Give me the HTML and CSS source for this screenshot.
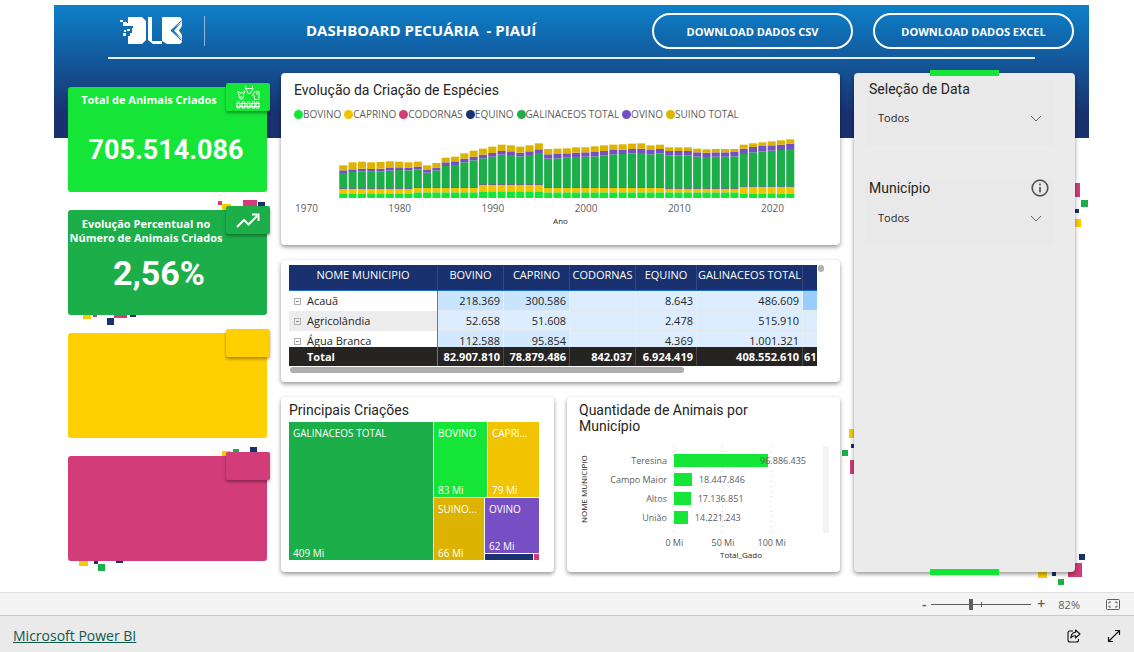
FILE: index.html
```html
<!DOCTYPE html>
<html lang="pt-BR">
<head>
<meta charset="utf-8">
<meta name="viewport" content="width=device-width, initial-scale=1">
<title>Dashboard Pecuária - Piauí</title>
<link rel="stylesheet" href="styles.css">
</head>
<body>
<main class="report">
  <header class="top">
    <svg class="logo" viewBox="0 0 63 30" width="63" height="30" aria-label="DLB" role="img">
      <g fill="#fff">
        <path d="M8 1H22L26 5V24L22 28H8V20H10V17H12V12H13V10H8Z"/>
        <path d="M28 1H32V25H42V28H33L28 24Z"/>
        <path d="M42 1H60L62 3V6L51 14.500L62 23V26L60 28H47L42 25Z"/>
        <rect x="0" y="4" width="3" height="2"/><rect x="3" y="6" width="4" height="4"/><rect x="7" y="7" width="2" height="3"/>
        <rect x="4" y="14" width="2" height="2"/><rect x="7" y="13" width="3" height="2"/><rect x="3" y="17" width="3" height="3"/>
        <path d="M62 6V10L59 14.500L62 19V23L54 14.500Z"/>
      </g>
      <path d="M61.500 4.500L51 14.500L61.500 24.500" fill="none" stroke="#125fa9"/>
    </svg>
    <span class="divider"></span>
    <h1>DASHBOARD PECUÁRIA &nbsp;- PIAUÍ</h1>
    <button class="pill" type="button">DOWNLOAD DADOS CSV</button>
    <button class="pill" type="button">DOWNLOAD DADOS EXCEL</button>
  </header>

  <div class="board">
    <div class="stats">
      <section class="stat lime">
        <h2>Total de Animais Criados</h2>
        <p>705.514.086</p>
        <span class="badge">
          <svg viewBox="0 0 24 24" width="24" height="24" fill="none" stroke="#fff" stroke-width=".9">
            <path d="M1 23V18L2.500 16L4 18V23ZM6 23V18L7.500 16L9 18V23ZM11 23V18L12.500 16L14 18V23ZM16 23V18L17.500 16L19 18V23ZM20 23V18L21.500 16L23 18V23ZM0 18.500H24M0 21.500H24"/>
            <path d="M2 8Q1 5.500 3 6.500L4 8H6.500L7.500 6.500Q9.500 5.500 8.500 8L7.500 9V12L6.500 14H4L3 12V9ZM4 12H6.500"/>
            <path d="M9.500 1Q9 3 11 3.500H15Q17 3 16.500 1M11 3.500L9 4L11 5.500L12 8.500H14.500L15.500 5.500L17.500 4L15 3.500"/>
            <path d="M18.500 7L20 6.500H23V14.500H18.500V11L16.500 10.500ZM21 7V10"/>
          </svg>
        </span>
      </section>
      <section class="stat green">
        <h2>Evolução Percentual no Número de Animais Criados</h2>
        <p>2,56%</p>
        <span class="badge">
          <svg viewBox="0 0 24 15" width="24" height="15" fill="none" stroke="#fff" stroke-width="2"><path d="M1 14L8 7L12.500 11.500L21 3M16 1.500H22.500V8"/></svg>
        </span>
        <svg class="confetti" viewBox="-2 -10 204 126" width="204" height="126">
          <path class="c-pink" d="M150-9h4v4h-4zM175-10h14v9h-14zM25 103h4v4h-4zM46 103h13v5h-13z"/>
          <path class="c-yellow" d="M154-6h9v8h-9zM15 103h8v6h-8z"/>
          <path class="c-navy" d="M190-8h7v7h-7zM39 108h7v7h-7zM62 103h6v4h-6z"/>
        </svg>
      </section>
      <section class="stat yellow"><span class="badge"></span></section>
      <section class="stat pink">
        <span class="badge"></span>
        <svg class="confetti" viewBox="-2 -10 204 126" width="204" height="126">
          <path class="c-yellow" d="M154-5h9v8h-9zM11 103h9v7h-9z"/>
          <path class="c-green" d="M165-7h6v7h-6zM30 108h7v7h-7z"/>
          <path class="c-navy" d="M182-9h7v7h-7zM26 103h4v5h-4zM48 103h7v4h-7z"/>
        </svg>
      </section>
    </div>

    <div class="middle">
      <section class="card trend">
        <h2>Evolução da Criação de Espécies</h2>
        <ul class="legend">
          <li class="k-bov">BOVINO</li><li class="k-cap">CAPRINO</li><li class="k-cod">CODORNAS</li><li class="k-equ">EQUINO</li><li class="k-gal">GALINACEOS TOTAL</li><li class="k-ovi">OVINO</li><li class="k-sui">SUINO TOTAL</li>
        </ul>
        <svg id="trend-plot" class="trend-plot" viewBox="0 0 530 180" preserveAspectRatio="none"></svg>
        <div class="years"><span>1970</span><span>1980</span><span>1990</span><span>2000</span><span>2010</span><span>2020</span></div>
        <p class="axis-name">Ano</p>
      </section>

      <section class="card matrix">
        <div class="matrix-view">
          <div class="matrix-clip">
            <table>
              <colgroup><col class="w-name"><col class="w-mid"><col class="w-mid"><col class="w-mid"><col class="w-small"><col class="w-large"><col class="w-mid"></colgroup>
              <thead><tr><th>NOME MUNICIPIO</th><th>BOVINO</th><th>CAPRINO</th><th>CODORNAS</th><th>EQUINO</th><th>GALINACEOS TOTAL</th><th></th></tr></thead>
              <tbody>
                <tr><th><button type="button" class="toggle" aria-label="Expandir Acauã"></button>Acauã</th><td class="h2">218.369</td><td class="h2">300.586</td><td></td><td>8.643</td><td>486.609</td><td class="h3"></td></tr>
                <tr><th><button type="button" class="toggle" aria-label="Expandir Agricolândia"></button>Agricolândia</th><td>52.658</td><td>51.608</td><td></td><td>2.478</td><td>515.910</td><td></td></tr>
                <tr><th><button type="button" class="toggle" aria-label="Expandir Água Branca"></button>Água Branca</th><td class="h1">112.588</td><td class="h1">95.854</td><td></td><td>4.369</td><td>1.001.321</td><td></td></tr>
              </tbody>
              <tfoot><tr><th>Total</th><td>82.907.810</td><td>78.879.486</td><td>842.037</td><td>6.924.419</td><td>408.552.610</td><td class="cut">61</td></tr></tfoot>
            </table>
          </div>
          <span class="v-thumb"></span>
        </div>
        <div class="h-thumb"></div>
      </section>

      <div class="pair">
        <section class="card tree">
          <h2>Principais Criações</h2>
          <div class="treemap">
            <div class="cell k-gal"><span>GALINACEOS TOTAL</span><span>409 Mi</span></div>
            <div class="tree-side">
              <div class="tree-top">
                <div class="cell k-bov"><span>BOVINO</span><span>83 Mi</span></div>
                <div class="cell k-cap"><span>CAPRI...</span><span>79 Mi</span></div>
              </div>
              <div class="tree-bottom">
                <div class="cell k-sui"><span>SUINO...</span><span>66 Mi</span></div>
                <div class="tree-last">
                  <div class="cell k-ovi"><span>OVINO</span><span>62 Mi</span></div>
                  <div class="tiny"><i class="k-equ"></i><i class="k-cod"></i></div>
                </div>
              </div>
            </div>
          </div>
        </section>

        <section class="card towns">
          <h2>Quantidade de Animais por Município</h2>
          <div class="bars">
            <div class="y-name">NOME MUNICIPIO</div>
            <ul class="names"><li>Teresina</li><li>Campo Maior</li><li>Altos</li><li>União</li></ul>
            <div class="plot">
              <svg class="gridlines" width="100%" height="100%"><line x1="0" x2="0" y1="0" y2="100%"/><line x1="34.6%" x2="34.6%" y1="0" y2="100%"/><line x1="69.300%" x2="69.300%" y1="0" y2="100%"/></svg>
              <div class="bar-row over"><i style="width:67.2%"></i><span>96.886.435</span></div>
              <div class="bar-row"><i style="width:12.8%"></i><span>18.447.846</span></div>
              <div class="bar-row"><i style="width:11.9%"></i><span>17.136.851</span></div>
              <div class="bar-row"><i style="width:9.9%"></i><span>14.221.243</span></div>
            </div>
            <span class="bar-scroll"></span>
            <div class="ticks"><span>0 Mi</span><span>50 Mi</span><span>100 Mi</span></div>
            <p class="axis-name">Total_Gado</p>
          </div>
        </section>
      </div>
    </div>

    <aside class="filters">
      <svg class="confetti" viewBox="-14 0 250 514" width="250" height="514">
        <path class="c-pink" d="M212 110h14v14h-14zM-4 387h14v14h-14zM214 490h14v14h-14z"/>
        <path class="c-green" d="M227 127h7v7h-7zM-12 377h6v6h-6zM204 506h6v6h-6z"/>
        <path class="c-navy" d="M220 136h5v4h-5zM-3 371h5v4h-5zM225 481h6v6h-6zM198 498h4v5h-4z"/>
        <path class="c-yellow" d="M218 146h9v8h-9zM-5 356h9v9h-9zM184 497h9v8h-9z"/>
      </svg>
      <div class="filter">
        <label for="date">Seleção de Data</label>
        <div class="pick"><select id="date"><option>Todos</option></select>
          <svg viewBox="0 0 12 7" width="12" height="7"><path d="M1 1L6 6L11 1"/></svg></div>
      </div>
      <div class="filter">
        <label for="town">Município</label>
        <button class="info" type="button" aria-label="Informações">
          <svg viewBox="0 0 18 18" width="18" height="18"><circle cx="9" cy="9" r="7.800"/><path d="M9 8V13.500M9 4.500V6.500"/></svg>
        </button>
        <div class="pick"><select id="town"><option>Todos</option></select>
          <svg viewBox="0 0 12 7" width="12" height="7"><path d="M1 1L6 6L11 1"/></svg></div>
      </div>
    </aside>
  </div>
</main>

<div class="zoombar">
  <button type="button" aria-label="Diminuir zoom">-</button>
  <span class="slider"><input type="range" min="0" max="100" value="39" aria-label="Zoom"></span>
  <button type="button" aria-label="Aumentar zoom">+</button>
  <output>82%</output>
  <button type="button" aria-label="Ajustar à página" class="fit">
    <svg viewBox="0 0 14 11" width="14" height="11" fill="none" stroke="#605e5c"><rect x=".5" y=".5" width="13" height="10" rx="1"/><path d="M3 4.500V3H5M9 3H11V4.500M11 6.500V8H9M5 8H3V6.500"/></svg>
  </button>
</div>
<footer class="foot">
  <a href="#">Microsoft Power BI</a>
  <button type="button" aria-label="Compartilhar">
    <svg viewBox="0 0 14 14" width="14" height="14" fill="none" stroke="#111" stroke-width="1.100"><path d="M6 2H3Q1 2 1 4V11Q1 13 3 13H9.500Q11.500 13 11.500 11V10"/><path d="M8.500 1L13 5L8.500 9V6.800Q5.500 6.500 3.800 9Q4.200 3.800 8.500 3.300Z" stroke-linejoin="round"/></svg>
  </button>
  <button type="button" aria-label="Tela cheia">
    <svg viewBox="0 0 14 14" width="14" height="14" fill="none" stroke="#111" stroke-width="1.200"><path d="M1.500 12.500L12.500 1.500M8 1.500H12.500V6M1.500 8V12.500H6"/></svg>
  </button>
</footer>
<script src="chart.js"></script>
</body>
</html>
```
FILE: styles.css
```css
* { box-sizing: border-box; }
body {
  margin: 0; min-height: 100vh; display: flex; flex-direction: column;
  background: #fff; color: #252423;
  font-family: "Open Sans", "Noto Sans", sans-serif; font-size: 11px;
}
h1, h2, p, ul { margin: 0; padding: 0; }
ul { list-style: none; }
button { font: inherit; color: inherit; background: none; border: 0; padding: 0; }
svg { display: block; }

.report {
  flex: 1; margin: 5px 45px 0 54px; isolation: isolate;
  background: linear-gradient(#0d80c9, #19316f 82%, #19316f) no-repeat 0 0 / 100% 133px;
}
.top { display: flex; align-items: center; height: 54px; margin: 0 15px 0 54px; padding: 0 0 2px 12px; position: relative; }
.top::after { content: ""; position: absolute; left: 0; right: 39px; bottom: 0; height: 2px; background: #e8eef6; }
.divider { width: 1px; height: 30px; margin-left: 21px; background: #8fb7dc; }
h1 { flex: 1; margin-left: 101px; padding-bottom: 2px; color: #fff; font-size: 15px; line-height: 20px; font-weight: 700; white-space: nowrap; }
.pill { width: 201px; height: 36px; margin-left: 20px; border: 2px solid #fff; border-radius: 18px; color: #fff; font-size: 11px; font-weight: 700; }

.board { display: grid; grid-template-columns: 199fr 559fr 221fr; gap: 14px; padding: 14px 14px 16px; }
.stats { display: flex; flex-direction: column; gap: 18px; padding-top: 14px; }
.stat { position: relative; height: 105px; border-radius: 3px; color: #fff; text-align: center; padding-top: 6px; }
.stat h2 { width: 156px; font-size: 11px; line-height: 14px; font-weight: 700; }
.stat p { margin-top: 6px; width: 182px; font: 700 34px/44px Roboto, sans-serif; }
.stat.lime { padding-top: 5px; }
.stat.lime h2 { width: 162px; line-height: 16px; }
.stat.lime p { width: 196px; margin-top: 20px; font-size: 27px; }
.badge { position: absolute; right: -3px; top: -4px; width: 44px; height: 28px; border-radius: 2px; background: inherit; box-shadow: 0 2px 3px rgba(0,0,0,.35); display: grid; place-items: center; }
.lime { background: #14e536; }
.green { background: #1cae49; }
.green { padding-top: 7px; }
.yellow { background: #ffcf00; }
.pink { background: #d23c78; }
.confetti { position: absolute; z-index: -1; left: -2px; top: -10px; }
.c-pink { fill: #d23c78; } .c-yellow { fill: #f9cb05; } .c-green { fill: #1cae49; } .c-navy { fill: #19316f; }

.middle { display: flex; flex-direction: column; gap: 15px; min-width: 0; }
.card { background: #fff; border-radius: 4px; box-shadow: 0 2px 4px rgba(0,0,0,.42); }
.card h2, .filter label { font: 400 14px/16px Roboto, sans-serif; }

.trend { height: 172px; padding: 9px 13px; }
.legend { display: flex; gap: 3px; margin-top: 9px; color: #605e5c; font-size: 10px; line-height: 14px; white-space: nowrap; }
.legend li { display: flex; align-items: center; }
.legend li::before { content: ""; width: 9px; height: 9px; border-radius: 50%; background: var(--k); }
.k-bov { --k: #14e536; } .k-cap { --k: #f0c400; } .k-cod { --k: #d23c78; } .k-equ { --k: #19316f; }
.k-gal { --k: #1cae49; } .k-ovi { --k: #774fc4; } .k-sui { --k: #dbb300; }
.trend-plot { width: 100%; height: 60px; margin-top: 17px; }
.trend-plot rect { fill: var(--k); }
.years { display: flex; justify-content: space-between; margin: 4px 43px 0 1px; color: #605e5c; font-size: 10px; line-height: 13px; }
.axis-name { text-align: center; font-size: 8px; line-height: 12px; color: #252423; }

.matrix { padding: 5px 16px 9px 8px; }
.matrix-view { display: flex; gap: 1px; }
.matrix-clip { flex: 1; height: 101px; overflow: hidden; min-width: 0; }
.v-thumb { width: 6px; height: 7px; border-radius: 3px; background: #b3b1af; }
.h-thumb { width: 394px; max-width: 75%; height: 6px; margin: 1px 0 0 1px; border-radius: 3px; background: #b0aeac; }
table { table-layout: fixed; width: 580px; border-collapse: separate; border-spacing: 0; font-size: 11px; line-height: 19px; }
.w-name { width: 149px; } .w-mid { width: 66px; } .w-small { width: 61px; } .w-large { width: 106px; }
th, td { padding: 0; font-weight: 400; white-space: nowrap; }
thead th { position: sticky; top: 0; height: 26px; padding-bottom: 6px; background: #19316f; color: #fff; border-right: 1px solid #334984; border-bottom: 1px solid #1f6dc4; }
tbody th { text-align: left; height: 20px; line-height: 18px; border-right: 1px solid #2b88d8; background: #fff; }
tbody tr:nth-child(2) th { background: #ededed; }
tbody td { text-align: right; padding-right: 3px; background: #dcedff; border-right: 1px solid #e6eef6; border-bottom: 1px solid #e3e6ea; }
td.h1 { background: #d2e8ff; } td.h2 { background: #c8e4ff; } td.h3 { background: #99cdff; }
tfoot th, tfoot td { position: sticky; bottom: 0; height: 19px; background: #252423; color: #fff; font-weight: 700; text-align: right; padding-right: 3px; border-right: 1px solid #4a4948; }
tfoot th { text-align: left; padding-left: 18px; border-right-color: #2b88d8; }
tfoot .cut { text-align: left; padding-left: 1px; }
.toggle { width: 7px; height: 7px; margin: 0 6px 0 5px; border: 1px solid #b3b1af; vertical-align: 1px; background: linear-gradient(#8a8886, #8a8886) center / 3px 1px no-repeat; }

.pair { display: grid; grid-template-columns: 1fr 1fr; gap: 13px; }
.tree { padding: 5px 15px 12px 8px; }
.treemap { display: grid; grid-template-columns: minmax(0, 144fr) minmax(0, 105fr); gap: 1px; height: 138px; margin-top: 4px; color: #fff; font-size: 10px; line-height: 14px; }
.cell { background: var(--k); padding: 4px 4px 0; display: flex; flex-direction: column; justify-content: space-between; white-space: nowrap; overflow: hidden; }
.tree-side { display: flex; flex-direction: column; gap: 1px; }
.tree-top { flex: 75; display: grid; grid-template-columns: 53fr 51fr; gap: 1px; }
.tree-bottom { flex: 62; display: grid; grid-template-columns: 50fr 54fr; gap: 1px; }
.tree-last { display: flex; flex-direction: column; gap: 1px; }
.tree-last .cell { flex: 1; }
.tiny { display: flex; gap: 1px; height: 6px; }
.tiny i { background: var(--k); flex: 1; }
.tiny i:first-child { flex: 9; }

.towns { padding: 5px 11px 10px 12px; min-height: 174px; }
.towns h2 { max-width: 200px; }
.bars { display: grid; grid-template-columns: 10px 78px 1fr 6px; margin-top: 12px; color: #605e5c; font-size: 9px; }
.y-name { writing-mode: vertical-rl; transform: rotate(180deg); text-align: center; font-size: 8px; line-height: 10px; color: #252423; white-space: nowrap; }
.names { text-align: right; line-height: 19px; padding-top: 5px; }
.plot { position: relative; margin-left: 7px; padding: 5px 0 6px; margin-right: 9px; }
.gridlines { position: absolute; inset: 0; overflow: visible; stroke: #d0cecc; stroke-dasharray: 1 4; }
.bar-row { position: relative; display: flex; align-items: center; height: 19px; }
.bar-row i { height: 13px; background: #14e536; flex: none; }
.bar-row span { margin-left: 7px; }
.over span { margin-left: -8px; }
.bar-scroll { background: #f3f3f3; }
.ticks { grid-column: 3; display: grid; grid-template-columns: repeat(3, minmax(0, 1fr)); margin: 3px 27px 0 -17px; text-align: center; line-height: 13px; white-space: nowrap; }
.bars .axis-name { grid-column: 3; margin-right: 8px; }

.filters { position: relative; background: #ebebeb; border-radius: 4px; box-shadow: 0 2px 4px rgba(0,0,0,.42); padding: 8px 21px 8px 11px; display: flex; flex-direction: column; gap: 33px; }
.filters .confetti { left: -14px; top: 0; }
.filters::before, .filters::after { content: ""; position: absolute; left: 76px; width: 69px; height: 6px; background: #14e536; }
.filters::before { top: -3px; } .filters::after { bottom: -3px; }
.filter { display: flex; flex-wrap: wrap; align-items: center; align-content: flex-start; justify-content: space-between; height: 65px; background: #e9e9e9; padding-left: 4px; }
.pick { display: flex; align-items: center; width: 100%; padding: 0 12px 0 9px; margin-top: 12px; }
.pick select { flex: 1; height: 18px; appearance: none; border: 0; background: none; padding: 0; font: 11px/18px "Open Sans", sans-serif; color: #252423; }
.pick svg { fill: none; stroke: #605e5c; }
.info { margin-right: 5px; }
.info svg { fill: none; stroke: #555; stroke-width: 1.700; }

.zoombar { display: flex; align-items: center; justify-content: flex-end; height: 23px; border-top: 1px solid #dedede; background: #f4f4f4; padding-right: 14px; color: #605e5c; font-size: 11px; }
.zoombar button { width: 8px; font-size: 14px; line-height: 14px; font-weight: 600; }
.slider { position: relative; display: flex; width: 100px; margin: 0 6px 0 3px; }
.slider::after { content: ""; position: absolute; left: 50px; top: 3px; width: 1px; height: 5px; background: #605e5c; }
.slider input { appearance: none; width: 100%; height: 11px; margin: 0; background: linear-gradient(#605e5c, #605e5c) center / 100% 1px no-repeat; }
.slider input::-webkit-slider-thumb { appearance: none; width: 4px; height: 11px; background: #605e5c; }
.zoombar output { margin-left: 13px; }
.zoombar .fit { width: 14px; margin-left: 26px; }
.foot { display: flex; align-items: center; height: 37px; border-top: 1px solid #c8c8c8; background: #eaeaea; padding: 3px 13px 0; gap: 26px; }
.foot a { margin-right: auto; color: #10594c; font-size: 14px; }
```
FILE: chart.js
```javascript
// One value per year from 1974: full bar height, then height up to the top of the poultry layer.
const totals = [98,107,109,107,108,110,109,107,109,98,105,121,124,134,142,148,154,160,158,154,158,164,147,148,
  149,152,152,155,158,160,161,163,164,158,160,152,152,152,148,146,147,147,147,160,164,167,170,173,176];
const poultryTop = [75,78,80,79,80,82,84,83,86,76,83,96,99,107,113,119,124,130,129,125,129,135,118,119,
  121,123,124,125,128,131,132,134,135,131,134,128,128,128,124,123,124,124,125,132,137,140,142,144,147];
const plot = document.getElementById('trend-plot');
const pitch = 9.26;
totals.forEach((total, i) => {
  const year = 1974 + i;
  const cattle = year < 1982 ? 14 : year < 1989 ? 17 : year < 1996 ? 20 : year < 2017 ? 17 : 14;
  const goats = year < 1989 ? 14 : year < 1996 ? 20 : year < 2009 ? 14 : year < 2017 ? 11 : 19;
  const sheep = year < 1985 ? 8 : year < 1996 ? 11 : year < 2017 ? 13 : 16;
  const layers = [['k-bov', cattle], ['k-cap', goats], ['k-equ', 2],
    ['k-gal', poultryTop[i] - cattle - goats - 2], ['k-ovi', sheep], ['k-sui', total - poultryTop[i] - sheep]];
  let y = 180;
  for (const [name, height] of layers) {
    y -= height;
    const bar = document.createElementNS('http://www.w3.org/2000/svg', 'rect');
    bar.setAttribute('class', name);
    bar.setAttribute('x', 45 + i * pitch);
    bar.setAttribute('y', y);
    bar.setAttribute('width', 8);
    bar.setAttribute('height', height);
    plot.appendChild(bar);
  }
});
```
